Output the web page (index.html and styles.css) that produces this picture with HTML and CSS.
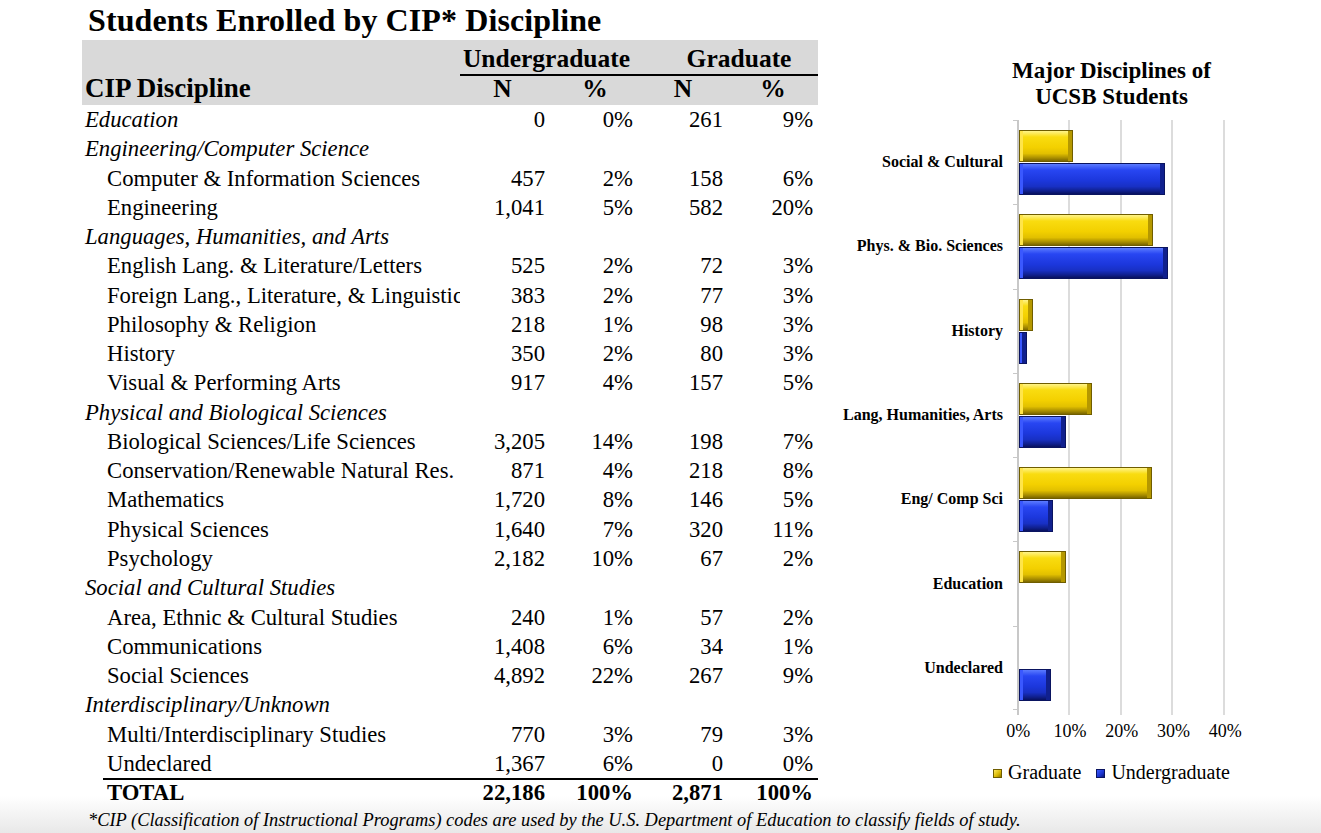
FILE: index.html
```html
<!DOCTYPE html>
<html lang="en">
<head>
<meta charset="utf-8">
<title>Students Enrolled by CIP Discipline</title>
<link rel="stylesheet" href="styles.css">
</head>
<body>
<div class="page">
  <div class="main">
    <div class="left">
      <h1 class="title">Students Enrolled by CIP* Discipline</h1>
      <table class="data">
        <colgroup>
          <col class="c-lbl"><col class="c-n1"><col class="c-p1"><col class="c-n2"><col class="c-p2">
        </colgroup>
        <thead>
          <tr class="h1"><th></th><th colspan="2" class="grp">Undergraduate</th><th colspan="2" class="grp grp2">Graduate</th></tr>
          <tr class="h2"><th class="lbl">CIP Discipline</th><th>N</th><th class="p1">%</th><th class="n2">N</th><th class="p2">%</th></tr>
        </thead>
        <tbody>
          <tr class="cat"><td class="lbl">Education</td><td class="num">0</td><td class="num">0%</td><td class="num">261</td><td class="num last">9%</td></tr>
          <tr class="cat"><td class="lbl">Engineering/Computer Science</td><td></td><td></td><td></td><td></td></tr>
          <tr class="sub"><td class="lbl">Computer &amp; Information Sciences</td><td class="num">457</td><td class="num">2%</td><td class="num">158</td><td class="num last">6%</td></tr>
          <tr class="sub"><td class="lbl">Engineering</td><td class="num">1,041</td><td class="num">5%</td><td class="num">582</td><td class="num last">20%</td></tr>
          <tr class="cat"><td class="lbl">Languages, Humanities, and Arts</td><td></td><td></td><td></td><td></td></tr>
          <tr class="sub"><td class="lbl">English Lang. &amp; Literature/Letters</td><td class="num">525</td><td class="num">2%</td><td class="num">72</td><td class="num last">3%</td></tr>
          <tr class="sub"><td class="lbl">Foreign Lang., Literature, &amp; Linguistics</td><td class="num">383</td><td class="num">2%</td><td class="num">77</td><td class="num last">3%</td></tr>
          <tr class="sub"><td class="lbl">Philosophy &amp; Religion</td><td class="num">218</td><td class="num">1%</td><td class="num">98</td><td class="num last">3%</td></tr>
          <tr class="sub"><td class="lbl">History</td><td class="num">350</td><td class="num">2%</td><td class="num">80</td><td class="num last">3%</td></tr>
          <tr class="sub"><td class="lbl">Visual &amp; Performing Arts</td><td class="num">917</td><td class="num">4%</td><td class="num">157</td><td class="num last">5%</td></tr>
          <tr class="cat"><td class="lbl">Physical and Biological Sciences</td><td></td><td></td><td></td><td></td></tr>
          <tr class="sub"><td class="lbl">Biological Sciences/Life Sciences</td><td class="num">3,205</td><td class="num">14%</td><td class="num">198</td><td class="num last">7%</td></tr>
          <tr class="sub"><td class="lbl">Conservation/Renewable Natural Res.</td><td class="num">871</td><td class="num">4%</td><td class="num">218</td><td class="num last">8%</td></tr>
          <tr class="sub"><td class="lbl">Mathematics</td><td class="num">1,720</td><td class="num">8%</td><td class="num">146</td><td class="num last">5%</td></tr>
          <tr class="sub"><td class="lbl">Physical Sciences</td><td class="num">1,640</td><td class="num">7%</td><td class="num">320</td><td class="num last">11%</td></tr>
          <tr class="sub"><td class="lbl">Psychology</td><td class="num">2,182</td><td class="num">10%</td><td class="num">67</td><td class="num last">2%</td></tr>
          <tr class="cat"><td class="lbl">Social and Cultural Studies</td><td></td><td></td><td></td><td></td></tr>
          <tr class="sub"><td class="lbl">Area, Ethnic &amp; Cultural Studies</td><td class="num">240</td><td class="num">1%</td><td class="num">57</td><td class="num last">2%</td></tr>
          <tr class="sub"><td class="lbl">Communications</td><td class="num">1,408</td><td class="num">6%</td><td class="num">34</td><td class="num last">1%</td></tr>
          <tr class="sub"><td class="lbl">Social Sciences</td><td class="num">4,892</td><td class="num">22%</td><td class="num">267</td><td class="num last">9%</td></tr>
          <tr class="cat"><td class="lbl">Interdisciplinary/Unknown</td><td></td><td></td><td></td><td></td></tr>
          <tr class="sub"><td class="lbl">Multi/Interdisciplinary Studies</td><td class="num">770</td><td class="num">3%</td><td class="num">79</td><td class="num last">3%</td></tr>
          <tr class="sub"><td class="lbl">Undeclared</td><td class="num">1,367</td><td class="num">6%</td><td class="num">0</td><td class="num last">0%</td></tr>
          <tr class="total"><td class="lbl">TOTAL</td><td class="num">22,186</td><td class="num">100%</td><td class="num">2,871</td><td class="num last">100%</td></tr>
        </tbody>
      </table>
    </div>
    <div class="chart">
      <h2 class="chart-title">Major Disciplines of<br>UCSB Students</h2>
      <div class="plot">
        <div class="cat-labels">
          <div>Social &amp; Cultural</div>
          <div>Phys. &amp; Bio. Sciences</div>
          <div>History</div>
          <div>Lang, Humanities, Arts</div>
          <div>Eng/ Comp Sci</div>
          <div>Education</div>
          <div>Undeclared</div>
        </div>
        <div class="ticks"></div>
        <div class="bars">
          <div class="group"><div class="bar gold" style="width:26%"></div><div class="bar blue" style="width:71%"></div></div>
          <div class="group"><div class="bar gold" style="width:65.2%"></div><div class="bar blue" style="width:72.5%"></div></div>
          <div class="group"><div class="bar gold" style="width:6.8%"></div><div class="bar blue" style="width:3.8%"></div></div>
          <div class="group"><div class="bar gold" style="width:35.3%"></div><div class="bar blue" style="width:22.7%"></div></div>
          <div class="group"><div class="bar gold" style="width:64.7%"></div><div class="bar blue" style="width:16.4%"></div></div>
          <div class="group"><div class="bar gold" style="width:22.7%"></div><div class="bar none"></div></div>
          <div class="group"><div class="bar none"></div><div class="bar blue" style="width:15.5%"></div></div>
        </div>
      </div>
      <div class="axis"><span>0%</span><span>10%</span><span>20%</span><span>30%</span><span>40%</span></div>
      <div class="legend">
        <div class="item"><span class="sw sw-gold"></span>Graduate</div>
        <div class="item"><span class="sw sw-blue"></span>Undergraduate</div>
      </div>
    </div>
  </div>
  <p class="foot">*CIP (Classification of Instructional Programs) codes are used by the U.S. Department of Education to classify fields of study.</p>
</div>
</body>
</html>
```
FILE: styles.css
```css
html, body {
  margin: 0;
  height: 100%;
  overflow: hidden;
}
body {
  font-family: "Liberation Serif", "Times New Roman", serif;
  color: #000;
  background: linear-gradient(to bottom, #fff 0, #fff 796px, #e8e8e8 833px);
}
.page {
  width: 1321px;
  box-sizing: border-box;
  padding-left: 82px;
}
.main {
  display: flex;
  gap: 22px;
}
.left {
  width: 736px;
  flex: none;
}
.title {
  margin: 0 0 0 6px;
  font-size: 32px;
  line-height: 40px;
  font-weight: bold;
  letter-spacing: 0.1px;
  white-space: nowrap;
}

/* table */
.data {
  width: 736px;
  table-layout: fixed;
  border-collapse: collapse;
  border-spacing: 0;
}
.c-lbl { width: 378px; }
.c-n1 { width: 85px; }
.c-p1 { width: 88px; }
.c-n2 { width: 90px; }
.c-p2 { width: 95px; }

.data thead { background: #d9d9d9; }
.data th {
  padding: 0;
  font-weight: bold;
  vertical-align: top;
  text-align: center;
  white-space: nowrap;
}
.h1 th {
  padding-top: 2px;
  font-size: 25.5px;
  line-height: 34px;
}
.h1 th.grp {
  background: linear-gradient(#000, #000) left bottom / 100% 2px no-repeat;
}
.h1 th.grp2 { padding-left: 27px; }
.h2 th {
  height: 29px;
  font-size: 25.5px;
  line-height: 25px;
}
.h2 th.lbl {
  text-align: left;
  padding-left: 3px;
  font-size: 27px;
}
.h2 th.p1 { padding-left: 12px; }
.h2 th.n2 { padding-left: 10px; }
.h2 th.p2 { padding-left: 5px; }

.data td {
  padding: 0;
  height: 29.26px;
  line-height: 29.26px;
  font-size: 22.7px;
  white-space: nowrap;
  overflow: hidden;
  vertical-align: top;
}
.data td.num { text-align: right; }
.data td.last { padding-right: 5px; }
.cat td.lbl {
  font-style: italic;
  padding-left: 3px;
}
.sub td.lbl { padding-left: 25px; }
.total td {
  font-weight: bold;
  background: linear-gradient(#000, #000) left top / 100% 2px no-repeat;
}
.total td.lbl {
  padding-left: 25px;
  background-position: 21px 0;
  background-size: calc(100% - 21px) 2px;
}

/* chart */
.chart {
  width: 481px;
  flex: none;
  padding-top: 58px;
}
.chart-title {
  margin: 0;
  padding-left: 62px;
  text-align: center;
  font-size: 23px;
  line-height: 26px;
  font-weight: bold;
}
.plot {
  display: flex;
  margin-top: 10px;
}
.cat-labels {
  width: 163px;
  margin-right: 10px;
  display: flex;
  flex-direction: column;
}
.cat-labels div {
  height: 84.286px;
  display: flex;
  align-items: center;
  justify-content: flex-end;
  font-size: 16px;
  font-weight: bold;
  white-space: nowrap;
}
.ticks {
  width: 4px;
  height: 590px;
  background:
    linear-gradient(#c8c8c8, #c8c8c8) left bottom / 100% 1px no-repeat,
    repeating-linear-gradient(to bottom, #c8c8c8 0 1px, transparent 1px 84.286px);
}
.bars {
  width: 206px;
  height: 595px;
  border-left: 2px solid #c8c8c8;
  background: repeating-linear-gradient(90deg, transparent 0 calc(25% - 2px), #dcdcdc calc(25% - 2px) 25%);
}
.group {
  height: 84.286px;
  box-sizing: border-box;
  padding-top: 10px;
  display: flex;
  flex-direction: column;
  gap: 1px;
}
.bar {
  height: 32px;
  box-sizing: border-box;
}
.gold {
  border: 1px solid #6f5d00;
  background: linear-gradient(180deg, #fff48a 0, #f9dc10 20%, #f3d000 55%, #e2c000 75%, #a88d00 90%, #7a6600 100%);
  box-shadow: inset -4px 0 0 #b59800, inset 3px 0 0 #ffe54a;
}
.blue {
  border: 1px solid #0a1460;
  background: linear-gradient(180deg, #5b7bff 0, #2846f2 20%, #1c37dc 55%, #1830c4 75%, #0f1f8c 90%, #08115e 100%);
  box-shadow: inset -4px 0 0 #10208e, inset 3px 0 0 #3a58ff;
}
.axis {
  display: flex;
  margin-left: 152.25px;
  margin-top: 4px;
}
.axis span {
  width: 51.75px;
  flex: none;
  text-align: center;
  font-size: 18px;
  line-height: 24px;
}
.legend {
  margin-top: 17px;
  padding-left: 62px;
  display: flex;
  justify-content: center;
  gap: 15px;
  font-size: 20px;
  line-height: 24px;
}
.legend .item {
  display: flex;
  align-items: center;
  white-space: nowrap;
}
.sw {
  width: 9px;
  height: 9px;
  margin-right: 6px;
  margin-top: 3px;
  box-sizing: border-box;
}
.sw-gold {
  border: 1px solid #6f5d00;
  background: linear-gradient(135deg, #ffe95a, #d8b600 60%, #8e7700);
}
.sw-blue {
  border: 1px solid #0a1460;
  background: linear-gradient(135deg, #3c5bff, #1a33cf 60%, #0b1770);
}

.foot {
  margin: 0 0 0 6px;
  font-style: italic;
  font-size: 18.4px;
  line-height: 26px;
  white-space: nowrap;
}
```
